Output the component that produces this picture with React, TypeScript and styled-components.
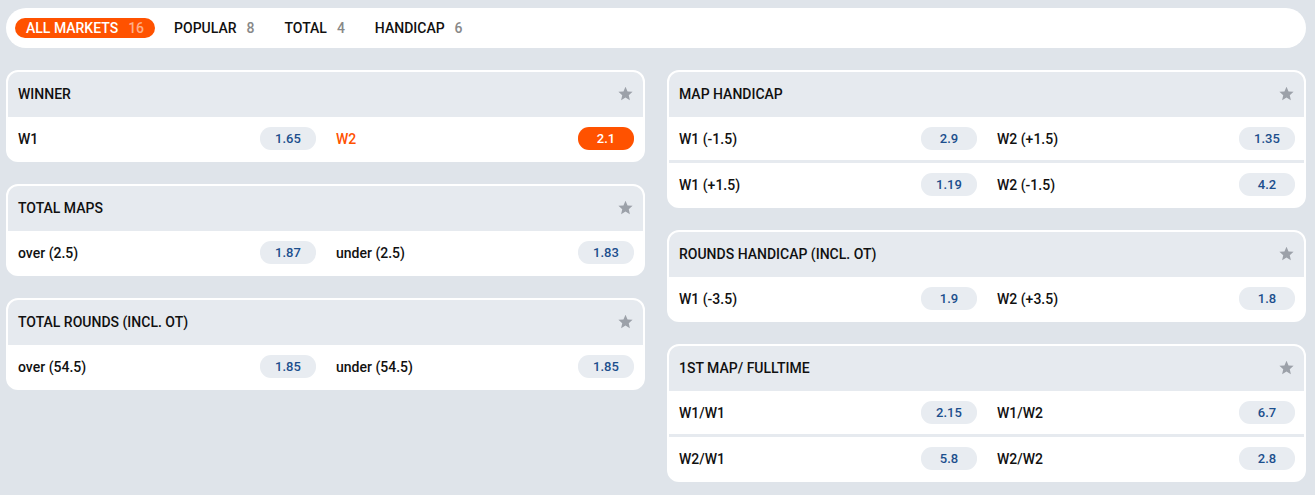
import styled, { createGlobalStyle } from "styled-components";

const GlobalStyle = createGlobalStyle`
  html, body {
    margin: 0;
    background: #dfe4ea;
    font-family: Roboto, "Liberation Sans", sans-serif;
  }
`;

const Page = styled.div`
  padding: 8px 9px 8px 6px;
`;

const TabBar = styled.nav`
  display: flex;
  align-items: center;
  gap: 8px;
  height: 40px;
  padding: 0 9px;
  background: #fff;
  border-radius: 20px;
  box-sizing: border-box;
`;

const Tab = styled.button<{ $active?: boolean }>`
  display: flex;
  align-items: center;
  gap: 10px;
  height: 20px;
  padding: 0 11px;
  border: none;
  border-radius: 10px;
  background: ${(p) => (p.$active ? "#ff5200" : "transparent")};
  color: ${(p) => (p.$active ? "#fff" : "#111")};
  font-family: inherit;
  font-size: 14px;
  font-weight: 500;
  text-transform: uppercase;
  cursor: pointer;
`;

const Count = styled.span<{ $active?: boolean }>`
  color: ${(p) => (p.$active ? "#ffae88" : "#888")};
`;

const Columns = styled.div`
  display: grid;
  grid-template-columns: 1fr 1fr;
  gap: 22px;
  margin-top: 22px;
  align-items: start;
`;

const Column = styled.div`
  display: flex;
  flex-direction: column;
  gap: 22px;
`;

const Card = styled.section`
  background: #fff;
  border: 2px solid #fff;
  border-radius: 12px;
  overflow: hidden;
`;

const Header = styled.header`
  display: flex;
  align-items: center;
  justify-content: space-between;
  height: 45px;
  padding: 0 9px 2px 10px;
  box-sizing: border-box;
  background: #e6eaef;
  font-size: 14px;
  font-weight: 500;
  color: #111;
  text-transform: uppercase;
`;

const Row = styled.div`
  display: grid;
  grid-template-columns: 1fr 1fr;
  gap: 20px;
  height: 43px;
  padding: 0 9px 0 10px;
  & + & {
    border-top: 3px solid #e6eaef;
  }
`;

const Outcome = styled.div`
  display: flex;
  align-items: center;
  justify-content: space-between;
`;

const Label = styled.span<{ $selected?: boolean }>`
  font-size: 14px;
  font-weight: 500;
  color: ${(p) => (p.$selected ? "#ff5200" : "#111")};
`;

const Odd = styled.button<{ $selected?: boolean }>`
  width: 56px;
  height: 23px;
  border: none;
  border-radius: 11px;
  background: ${(p) => (p.$selected ? "#ff5200" : "#e8ecf1")};
  color: ${(p) => (p.$selected ? "#fff" : "#1c4f8d")};
  font-family: inherit;
  font-size: 13px;
  font-weight: 500;
  cursor: pointer;
`;

const Star = () => (
  <svg width="17" height="17" viewBox="0 0 24 24" fill="#9ca1a9">
    <path d="M12 2.5l2.9 6.6 7.1.6-5.4 4.7 1.6 7-6.2-3.7-6.2 3.7 1.6-7L2 9.7l7.1-.6z" />
  </svg>
);

type Pair = [string, string];
type Market = { title: string; rows: Pair[][]; selected?: string };

const left: Market[] = [
  { title: "Winner", rows: [[["W1", "1.65"], ["W2", "2.1"]]], selected: "W2" },
  { title: "Total maps", rows: [[["over (2.5)", "1.87"], ["under (2.5)", "1.83"]]] },
  { title: "Total rounds (incl. OT)", rows: [[["over (54.5)", "1.85"], ["under (54.5)", "1.85"]]] },
];

const right: Market[] = [
  {
    title: "Map handicap",
    rows: [
      [["W1 (-1.5)", "2.9"], ["W2 (+1.5)", "1.35"]],
      [["W1 (+1.5)", "1.19"], ["W2 (-1.5)", "4.2"]],
    ],
  },
  { title: "Rounds handicap (incl. OT)", rows: [[["W1 (-3.5)", "1.9"], ["W2 (+3.5)", "1.8"]]] },
  {
    title: "1st map/ fulltime",
    rows: [
      [["W1/W1", "2.15"], ["W1/W2", "6.7"]],
      [["W2/W1", "5.8"], ["W2/W2", "2.8"]],
    ],
  },
];

const tabs = [
  { name: "All markets", count: 16 },
  { name: "Popular", count: 8 },
  { name: "Total", count: 4 },
  { name: "Handicap", count: 6 },
];

function MarketCard({ market }: { market: Market }) {
  return (
    <Card>
      <Header>
        {market.title}
        <Star />
      </Header>
      {market.rows.map((row, i) => (
        <Row key={i}>
          {row.map(([label, odd]) => {
            const sel = market.selected === label;
            return (
              <Outcome key={label}>
                <Label $selected={sel}>{label}</Label>
                <Odd $selected={sel}>{odd}</Odd>
              </Outcome>
            );
          })}
        </Row>
      ))}
    </Card>
  );
}

export default function App() {
  return (
    <Page>
      <GlobalStyle />
      <TabBar>
        {tabs.map((t, i) => (
          <Tab key={t.name} $active={i === 0}>
            {t.name}
            <Count $active={i === 0}>{t.count}</Count>
          </Tab>
        ))}
      </TabBar>
      <Columns>
        <Column>
          {left.map((m) => (
            <MarketCard key={m.title} market={m} />
          ))}
        </Column>
        <Column>
          {right.map((m) => (
            <MarketCard key={m.title} market={m} />
          ))}
        </Column>
      </Columns>
    </Page>
  );
}
